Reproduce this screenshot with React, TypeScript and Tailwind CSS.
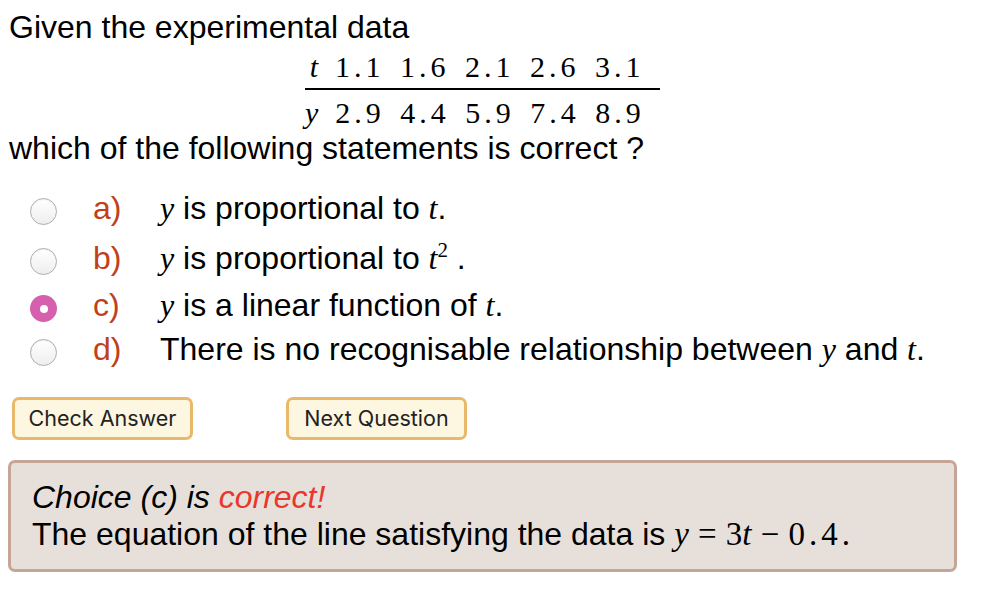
import React from "react";

const SANS = "font-['Liberation_Sans',Arial,sans-serif]";
const SERIF = "font-['Liberation_Serif','Times_New_Roman',serif]";

function M({ children, italic = true }: { children: React.ReactNode; italic?: boolean }) {
  return <span className={`${SERIF} ${italic ? "italic" : ""}`}>{children}</span>;
}

function Radio({ checked }: { checked?: boolean }) {
  if (checked) {
    return (
      <span className="flex h-[27px] w-[27px] shrink-0 items-center justify-center rounded-full bg-[#d65fae]">
        <span className="block h-[8px] w-[8px] rounded-full bg-white" />
      </span>
    );
  }
  return (
    <span className="block h-[27px] w-[27px] shrink-0 rounded-full border border-[#adadad] bg-gradient-to-b from-[#ffffff] to-[#eeeeee] shadow-[inset_0_1px_1px_rgba(0,0,0,0.06)]" />
  );
}

const T_ROW = ["1.1", "1.6", "2.1", "2.6", "3.1"];
const Y_ROW = ["2.9", "4.4", "5.9", "7.4", "8.9"];

function DataRow({ label, values, className }: { label: string; values: string[]; className: string }) {
  return (
    <div className={`flex h-[30px] items-center text-[30px] leading-[30px] ${SERIF} ${className}`}>
      <span className="w-[20px] text-right italic">{label}</span>
      <span className="ml-[17px] flex">
        {values.map((v) => (
          <span key={v} className="w-[65px] tracking-[4px]">{v}</span>
        ))}
      </span>
    </div>
  );
}

const OPTIONS: { key: string; mt: string; checked?: boolean; body: React.ReactNode }[] = [
  { key: "a)", mt: "mt-[20px]", body: <><M>y</M> is proportional to <M>t</M>.</> },
  {
    key: "b)",
    mt: "mt-[6px]",
    body: (
      <>
        <M>y</M> is proportional to <M>t</M>
        <span className={`${SERIF} relative -top-[12px] text-[21px]`}>2</span> .
      </>
    ),
  },
  { key: "c)", mt: "mt-[3px]", checked: true, body: <><M>y</M> is a linear function of <M>t</M>.</> },
  { key: "d)", mt: "mt-0", body: <>There is no recognisable relationship between <M>y</M> and <M>t</M>.</> },
];

function Button({ children }: { children: React.ReactNode }) {
  return (
    <button className="flex h-[43px] w-[181px] items-center justify-center rounded-[7px] border-[3px] border-[#e8b96b] bg-[#fdf6e1] font-['Inter',sans-serif] text-[21.5px] text-[#222222]">
      {children}
    </button>
  );
}

export default function App() {
  return (
    <div className={`min-h-[606px] w-[1000px] bg-white text-black ${SANS} text-[32px]`}>
      <p className="ml-[9px] pt-[9px] leading-[36px]">Given the experimental data</p>

      <div className="ml-[305px] mt-[7px] w-[355px]">
        <DataRow label="t" values={T_ROW} className="" />
        <div className="mt-[6px] h-[2px] bg-black" />
        <DataRow label="y" values={Y_ROW} className="mt-[8px]" />
      </div>

      <p className="ml-[9px] mt-[2px] leading-[36px]">which of the following statements is correct ?</p>

      <ul>
        {OPTIONS.map((o) => (
          <li key={o.key} className={`flex h-[44px] items-start leading-[44px] ${o.mt}`}>
            <span className="ml-[30px] mt-[12px] block">
              <Radio checked={o.checked} />
            </span>
            <span className="ml-[36px] w-[67px] text-[#c0401c]">{o.key}</span>
            <span className="whitespace-nowrap">{o.body}</span>
          </li>
        ))}
      </ul>

      <div className="ml-[12px] mt-[26px] flex gap-[93px]">
        <Button>Check Answer</Button>
        <Button>Next Question</Button>
      </div>

      <div className="ml-[8px] mt-[20px] w-[949px] rounded-[7px] border-[3px] border-[#c5a696] bg-[#e7e0da] pb-[18px] pl-[21px] pt-[17px] leading-[34px]">
        <p className="italic">
          Choice (c) is <span className="text-[#e8382b]">correct!</span>
        </p>
        <p className="mt-[3px]">
          The equation of the line satisfying the data is{" "}
          <span className="text-[33px]">
            <M>y</M> <M italic={false}>=</M> <M italic={false}>3</M>
            <M>t</M> <M italic={false}>−</M>{" "}
            <M italic={false}>
              <span className="tracking-[4px]">0.4</span>.
            </M>
          </span>
        </p>
      </div>
    </div>
  );
}
